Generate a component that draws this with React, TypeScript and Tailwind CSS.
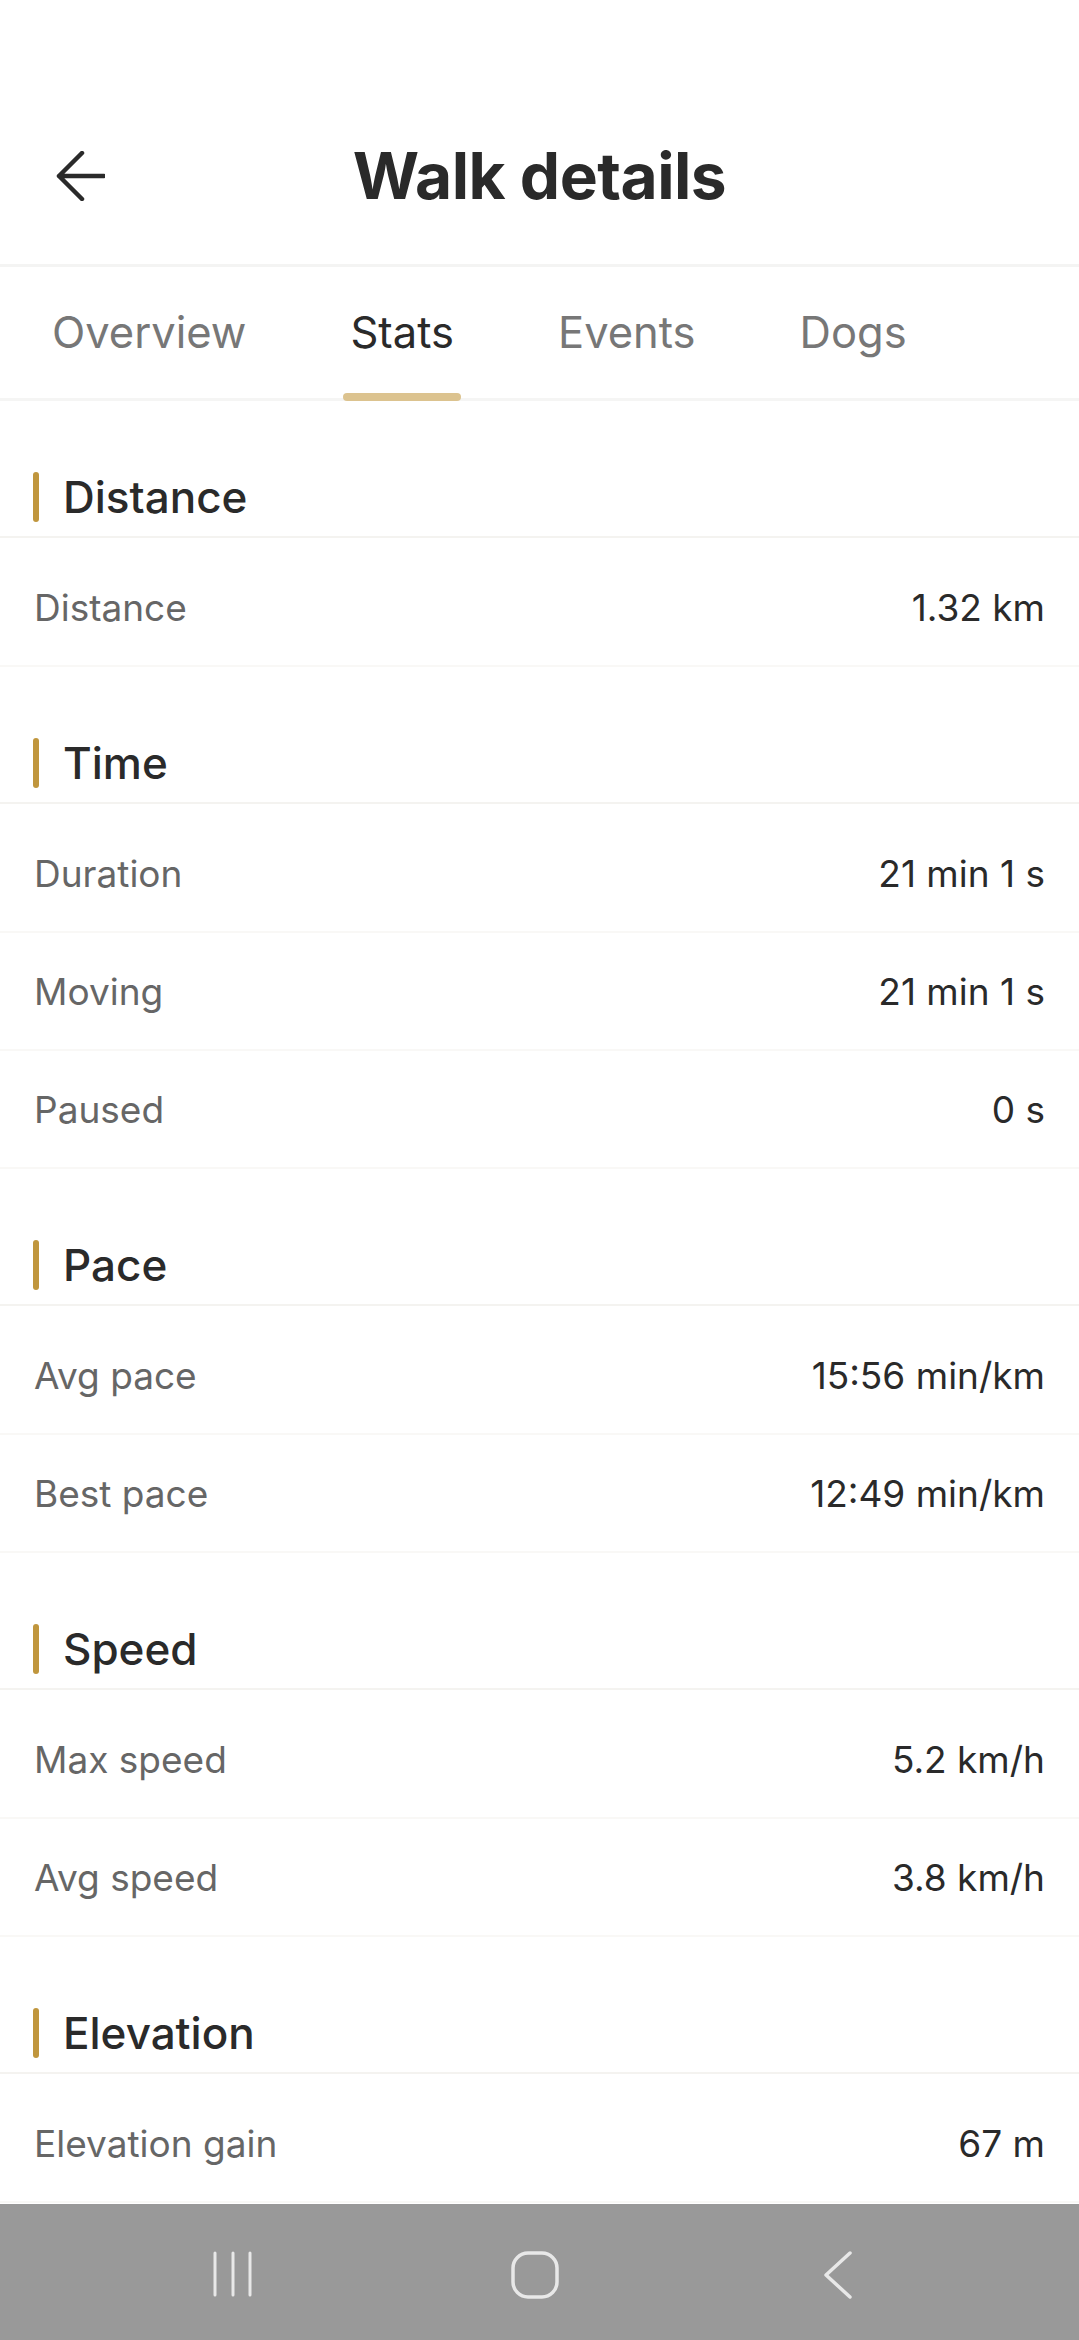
import React from "react";

type Row = { label: string; value: string };
type Section = { title: string; rows: Row[] };

const SECTIONS: Section[] = [
  { title: "Distance", rows: [{ label: "Distance", value: "1.32 km" }] },
  {
    title: "Time",
    rows: [
      { label: "Duration", value: "21 min 1 s" },
      { label: "Moving", value: "21 min 1 s" },
      { label: "Paused", value: "0 s" },
    ],
  },
  {
    title: "Pace",
    rows: [
      { label: "Avg pace", value: "15:56 min/km" },
      { label: "Best pace", value: "12:49 min/km" },
    ],
  },
  {
    title: "Speed",
    rows: [
      { label: "Max speed", value: "5.2 km/h" },
      { label: "Avg speed", value: "3.8 km/h" },
    ],
  },
  { title: "Elevation", rows: [{ label: "Elevation gain", value: "67 m" }] },
];

const TABS = ["Overview", "Stats", "Events", "Dogs"];

const BackArrow = () => (
  <svg width="50" height="50" viewBox="0 0 50 50" fill="none">
    <path d="M49 25H4M27 2L4 25L27 48" stroke="#2a2a2a" strokeWidth="4.5" strokeLinecap="round" strokeLinejoin="round" />
  </svg>
);

const App = () => {
  return (
    <div
      className="w-[1079px] h-[2340px] flex flex-col bg-white overflow-hidden"
      style={{ fontFamily: "Inter, Roboto, 'Noto Sans', sans-serif" }}
    >
      {/* status bar space */}
      <div className="h-[88px] shrink-0" />

      {/* Header */}
      <div className="relative h-[179px] shrink-0 flex items-center justify-center border-b-[3px] border-[#f4f4f3]">
        <div className="absolute left-[55px] top-[63px]">
          <BackArrow />
        </div>
        <h1 className="text-[64px] font-bold text-[#2a2a2a] tracking-[-0.5px] leading-none">Walk details</h1>
      </div>

      {/* Tabs */}
      <div className="h-[134px] shrink-0 flex items-center gap-[104px] pl-[52px] border-b-[3px] border-[#f5f5f4]">
        {TABS.map((t) => (
          <div key={t} className="relative h-full flex items-center">
            <span
              className={`text-[43.5px] leading-none ${t === "Stats" ? "text-[#2a2a2a]" : "text-[#777777]"}`}
            >
              {t}
            </span>
            {t === "Stats" && (
              <div className="absolute -left-[7px] -right-[7px] bottom-[-3px] h-[8px] rounded-full bg-[#dcc38f]" />
            )}
          </div>
        ))}
      </div>

      {/* Stats */}
      <div className="flex-1 overflow-hidden">
        {SECTIONS.map((s) => (
          <div key={s.title} className="mt-[57px]">
            <div className="h-[80px] flex items-center gap-[24px] pl-[33px] border-b-2 border-[#f4f3f0]">
              <div className="w-[6px] h-[50px] rounded-full bg-[#c0963d]" />
              <span className="text-[44px] font-medium text-[#2a2a2a] leading-none">{s.title}</span>
            </div>
            <div className="pt-[11px]">
              {s.rows.map((r) => (
                <div
                  key={r.label}
                  className="h-[118px] flex items-center justify-between px-[34px] border-b-2 border-[#f9f8f6]"
                >
                  <span className="text-[37px] text-[#666666] leading-none">{r.label}</span>
                  <span className="text-[37px] text-[#2a2a2a] leading-none">{r.value}</span>
                </div>
              ))}
            </div>
          </div>
        ))}
      </div>

      {/* System nav bar */}
      <div className="relative h-[136px] shrink-0 bg-[#999999]">
        <svg className="absolute left-[208px] top-[46px]" width="50" height="50" viewBox="0 0 50 50" fill="none">
          <path d="M7 3V45M25 3V45M42 3V45" stroke="#e8e8e8" strokeWidth="3" strokeLinecap="round" />
        </svg>
        <svg className="absolute left-[510px] top-[46px]" width="52" height="50" viewBox="0 0 52 50" fill="none">
          <rect x="3" y="3" width="44" height="44" rx="15" stroke="#e8e8e8" strokeWidth="3.5" />
        </svg>
        <svg className="absolute left-[820px] top-[46px]" width="36" height="50" viewBox="0 0 36 50" fill="none">
          <path d="M30 3L6 25L30 47" stroke="#e8e8e8" strokeWidth="3.5" strokeLinecap="round" strokeLinejoin="round" />
        </svg>
      </div>
    </div>
  );
};

export default App;
